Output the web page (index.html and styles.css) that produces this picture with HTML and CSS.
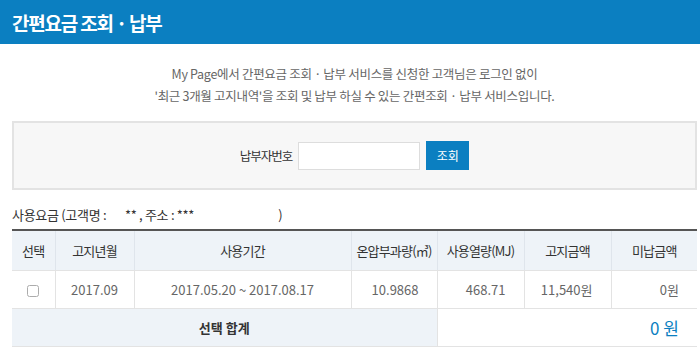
FILE: index.html
```html
<!DOCTYPE html>
<html>
<head>
  <meta charset="utf-8">
  <title>간편요금 조회 · 납부</title>
  <link rel="stylesheet" href="styles.css">
</head>
<body>

  <!-- Title Bar -->
  <div class="title-bar">
    <h1 class="title">간편요금 조회 · 납부</h1>
  </div>

  <div class="content">
    <p class="intro">
      My Page에서 간편요금 조회 · 납부 서비스를 신청한 고객님은 로그인 없이<br>
      '최근 3개월 고지내역'을 조회 및 납부 하실 수 있는 간편조회 · 납부 서비스입니다.
    </p>

    <!-- Search Box -->
    <div class="search-box">
      <label class="search-label" for="payerNo">납부자번호</label>
      <input class="search-input" type="text" id="payerNo">
      <button class="search-btn">조회</button>
    </div>

    <!-- Bill Table -->
    <div class="caption">
      사용요금 (고객명 : <span class="mask-name">**</span> , 주소 : <span class="mask-addr">***</span>)
    </div>

    <table class="bill-table">
      <colgroup>
        <col class="c-check">
        <col class="c-month">
        <col class="c-period">
        <col class="c-volume">
        <col class="c-heat">
        <col class="c-amount">
        <col class="c-unpaid">
      </colgroup>
      <thead>
        <tr>
          <th>선택</th>
          <th>고지년월</th>
          <th>사용기간</th>
          <th>온압부과량(㎥)</th>
          <th>사용열량(MJ)</th>
          <th>고지금액</th>
          <th>미납금액</th>
        </tr>
      </thead>
      <tbody>
        <tr>
          <td class="center"><input type="checkbox" class="row-check"></td>
          <td class="center">2017.09</td>
          <td class="center">2017.05.20 ~ 2017.08.17</td>
          <td class="num">10.9868</td>
          <td class="num">468.71</td>
          <td class="num">11,540원</td>
          <td class="num">0원</td>
        </tr>
        <tr class="sum-row">
          <td colspan="4" class="sum-label">선택 합계</td>
          <td colspan="3" class="sum-value">0 원</td>
        </tr>
      </tbody>
    </table>
  </div>

</body>
</html>
```

FILE: styles.css
```css
body {
  margin: 0;
  padding: 0;
  font-family: "Noto Sans CJK KR", "Noto Sans", sans-serif;
  background-color: #fff;
  color: #333;
}

/* Title Bar */
.title-bar {
  height: 44px;
  background-color: #0b7fc1;
  display: flex;
  align-items: center;
  padding-left: 12px;
}

.title {
  margin: 0;
  font-size: 19px;
  font-weight: bold;
  color: #fff;
  letter-spacing: -1.2px;
}

.content {
  padding: 0 3px 0 12px;
}

.intro {
  margin: 19px 0 14px;
  text-align: center;
  font-size: 12.5px;
  line-height: 22px;
  color: #666;
  letter-spacing: -0.3px;
}

/* Search Box */
.search-box {
  height: 65px;
  border: 2px solid #e3e3e3;
  background-color: #f7f7f7;
  display: flex;
  align-items: center;
  justify-content: center;
  gap: 6px;
}

.search-label {
  font-size: 12.5px;
  color: #333;
  letter-spacing: -1px;
}

.search-input {
  width: 118px;
  height: 24px;
  margin: 0;
  padding: 1px;
  border: 1px solid #ddd;
  background-color: #fff;
}

.search-btn {
  width: 43px;
  height: 29px;
  border: none;
  background-color: #0b7fc1;
  color: #fff;
  font-family: inherit;
  font-size: 12px;
  cursor: pointer;
}

/* Caption */
.caption {
  margin-top: 15px;
  font-size: 13px;
  line-height: 20px;
  letter-spacing: -0.3px;
  color: #333;
}

.mask-name {
  padding-left: 16px;
}

.mask-addr {
  padding-right: 84px;
}

/* Bill Table */
.bill-table {
  width: 100%;
  margin-top: 4px;
  border-collapse: collapse;
  table-layout: fixed;
  border-top: 2px solid #555;
}

.c-check { width: 43px; }
.c-month { width: 79px; }
.c-period { width: 217px; }
.c-volume { width: 86px; }
.c-heat { width: 87px; }
.c-amount { width: 87px; }
.c-unpaid { width: 86px; }

.bill-table th {
  height: 39px;
  padding: 0;
  background-color: #eef3f8;
  font-size: 13px;
  font-weight: normal;
  color: #333;
  letter-spacing: -0.8px;
  border-left: 1px solid #dfe5ec;
  border-bottom: 1px solid #e3e3e3;
}

.bill-table th:first-child,
.bill-table td:first-child {
  border-left: none;
}

.bill-table td {
  height: 37px;
  padding: 0 18px 0 0;
  font-size: 13px;
  color: #666;
  border-left: 1px solid #e3e3e3;
  border-bottom: 1px solid #e3e3e3;
}

.bill-table td.center {
  text-align: center;
  padding: 0;
}

.bill-table td.num {
  text-align: right;
}

.row-check {
  margin: 0;
  width: 12px;
  height: 12px;
  vertical-align: middle;
  opacity: 0.6;
}

/* Sum Row */
.sum-row td {
  height: 37px;
}

.bill-table td.sum-label {
  padding: 0;
  background-color: #eef3f8;
  text-align: center;
  font-weight: bold;
  color: #333;
}

.bill-table td.sum-value {
  text-align: right;
  font-size: 17px;
  color: #0b7fc1;
}
```
